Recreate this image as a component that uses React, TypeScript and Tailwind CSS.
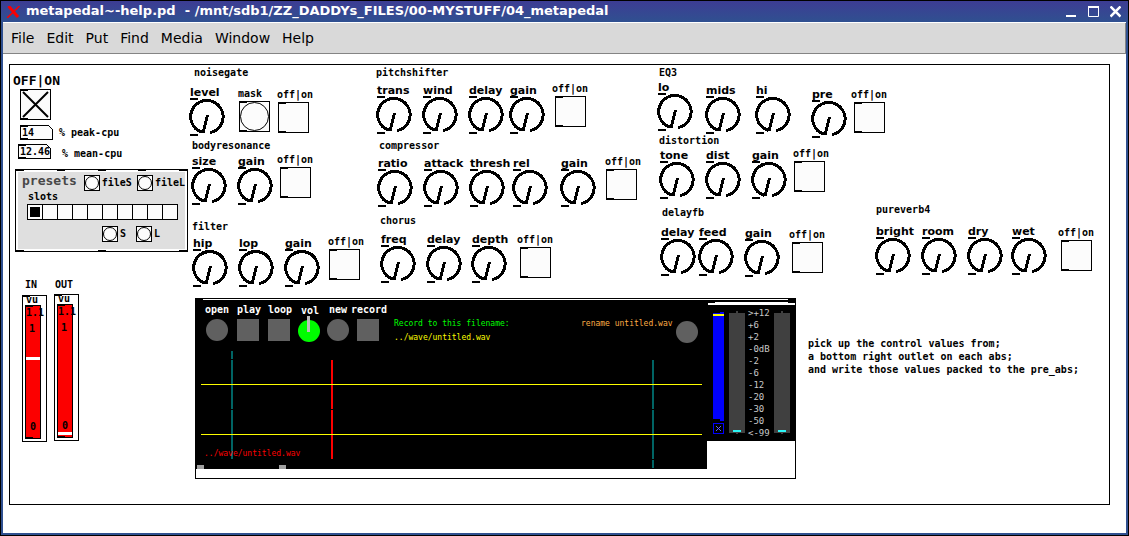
import { useState } from "react";
import type { ReactNode } from "react";
import clsx from "clsx";

type KnobNode = { label: string; at: string };

const menus = ["File", "Edit", "Put", "Find", "Media", "Window", "Help"];

const titles = [
  { text: "noisegate", at: "left-[184px] top-[2px]" },
  { text: "bodyresonance", at: "left-[182px] top-[75px]" },
  { text: "filter", at: "left-[182px] top-[156px]" },
  { text: "pitchshifter", at: "left-[366px] top-[2px]" },
  { text: "compressor", at: "left-[369px] top-[75px]" },
  { text: "chorus", at: "left-[370px] top-[150px]" },
  { text: "EQ3", at: "left-[649px] top-[2px]" },
  { text: "distortion", at: "left-[649px] top-[70px]" },
  { text: "delayfb", at: "left-[652px] top-[142px]" },
  { text: "pureverb4", at: "left-[866px] top-[139px]" },
  { text: "IN", at: "left-[15px] top-[214px]" },
  { text: "OUT", at: "left-[45px] top-[214px]" },
  { text: "% peak-cpu", at: "left-[49px] top-[62px]" },
  { text: "% mean-cpu", at: "left-[52px] top-[83px]" },
];

const knobs: KnobNode[] = [
  { label: "level", at: "left-[179px] top-[20px]" },
  { label: "size", at: "left-[181px] top-[89px]" },
  { label: "gain", at: "left-[227px] top-[89px]" },
  { label: "hip", at: "left-[182px] top-[171px]" },
  { label: "lop", at: "left-[228px] top-[171px]" },
  { label: "gain", at: "left-[274px] top-[171px]" },
  { label: "trans", at: "left-[366px] top-[18px]" },
  { label: "wind", at: "left-[412px] top-[18px]" },
  { label: "delay", at: "left-[458px] top-[18px]" },
  { label: "gain", at: "left-[499px] top-[18px]" },
  { label: "ratio", at: "left-[367px] top-[91px]" },
  { label: "attack", at: "left-[413px] top-[91px]" },
  { label: "thresh", at: "left-[459px] top-[91px]" },
  { label: "rel", at: "left-[502px] top-[91px]" },
  { label: "gain", at: "left-[550px] top-[91px]" },
  { label: "freq", at: "left-[370px] top-[167px]" },
  { label: "delay", at: "left-[416px] top-[167px]" },
  { label: "depth", at: "left-[461px] top-[167px]" },
  { label: "lo", at: "left-[647px] top-[15px]" },
  { label: "mids", at: "left-[695px] top-[18px]" },
  { label: "hi", at: "left-[745px] top-[18px]" },
  { label: "pre", at: "left-[801px] top-[22px]" },
  { label: "tone", at: "left-[649px] top-[83px]" },
  { label: "dist", at: "left-[695px] top-[83px]" },
  { label: "gain", at: "left-[741px] top-[83px]" },
  { label: "delay", at: "left-[650px] top-[160px]" },
  { label: "feed", at: "left-[688px] top-[160px]" },
  { label: "gain", at: "left-[734px] top-[161px]" },
  { label: "bright", at: "left-[865px] top-[159px]" },
  { label: "room", at: "left-[911px] top-[159px]" },
  { label: "dry", at: "left-[957px] top-[159px]" },
  { label: "wet", at: "left-[1001px] top-[159px]" },
];

const switches = [
  { at: "left-[267px] top-[24px]", inset: "ml-px" },
  { at: "left-[267px] top-[89px]", inset: "ml-[3px]" },
  { at: "left-[318px] top-[171px]", inset: "ml-px" },
  { at: "left-[542px] top-[18px]", inset: "ml-[3px]" },
  { at: "left-[595px] top-[91px]", inset: "ml-px" },
  { at: "left-[507px] top-[169px]", inset: "ml-[3px]" },
  { at: "left-[841px] top-[24px]", inset: "ml-[3px]" },
  { at: "left-[783px] top-[83px]", inset: "ml-px" },
  { at: "left-[779px] top-[164px]", inset: "ml-[3px]" },
  { at: "left-[1048px] top-[162px]", inset: "ml-[3px]" },
];

const dbScale = [">+12", "+6", "+2", "-0dB", "-2", "-6", "-12", "-20", "-30", "-50", "<-99"];

// inlet/outlet marks in the left corners of a box
const marks =
  "before:absolute before:left-0 before:top-0 before:h-px before:w-[7px] before:bg-black after:absolute after:bottom-0 after:left-0 after:h-px after:w-[7px] after:bg-black";

function Node({ at, children }: { at: string; children: ReactNode }) {
  return <div className={clsx("absolute", at)}>{children}</div>;
}

function Knob({ label, at }: KnobNode) {
  return (
    <Node at={at}>
      <label className="block w-[37px]">
        <span className="block h-[13px] whitespace-nowrap pl-px text-[11px] leading-[15px] font-['DejaVu_Sans'] font-bold">
          {label}
        </span>
        <span className="relative block h-[38px]">
          <svg width="37" height="38" viewBox="0 0 37 38" fill="none" stroke="#000" shapeRendering="crispEdges">
            <path d="M1 1h8M1 37h8" strokeWidth="2" />
            <path d="M13.500 34.3A16.2 16.2 0 1 1 21 34.6" strokeWidth="3" />
            <path d="M18.500 17l-4.500 18" strokeWidth="3" />
          </svg>
          <input type="range" defaultValue={0} className="absolute inset-0 h-full w-full cursor-pointer opacity-0" />
        </span>
      </label>
    </Node>
  );
}

function Toggle({ id, cross = false }: { id: string; cross?: boolean }) {
  const [on, setOn] = useState(cross);
  return (
    <span className="relative block h-[31px] w-[31px]">
      <input
        id={id}
        type="checkbox"
        checked={on}
        onChange={() => setOn(!on)}
        className={clsx("relative block h-[31px] w-[31px] appearance-none border border-black bg-[#fcfcfc]", marks)}
      />
      {on && (
        <svg className="pointer-events-none absolute inset-0" viewBox="0 0 31 31" stroke="#000" strokeWidth="2">
          <path d="M3 3L28 28M28 3L3 28" />
        </svg>
      )}
    </span>
  );
}

function Bang({ label, size }: { label: string; size: "small" | "large" }) {
  return (
    <button
      aria-label={label}
      className={clsx(
        "relative flex items-center justify-center border border-black bg-[#fcfcfc]",
        size === "large" ? "h-[31px] w-[31px]" : "h-4 w-4",
        size === "large" && marks
      )}
    >
      <span className="block h-full w-full rounded-full border border-black active:bg-black" />
    </button>
  );
}

function SmallBang({ label }: { label: string }) {
  return (
    <div className="flex items-center gap-[2px]">
      <Bang label={label} size="small" />
      <span>{label}</span>
    </div>
  );
}

function Presets() {
  const [slot, setSlot] = useState(0);
  return (
    <section className="relative w-[173px] border border-black p-[2px] leading-[12px]">
      <div className="absolute inset-x-0 top-0 flex justify-between">
        {[0, 1, 2, 3, 4].map((n) => (
          <span key={n} className="h-px w-2 bg-black" />
        ))}
      </div>
      <div className="absolute inset-x-0 bottom-0 flex justify-between">
        {[0, 1, 2].map((n) => (
          <span key={n} className="h-px w-2 bg-black" />
        ))}
      </div>
      <div className="h-[77px] bg-[#dfdfdf] pt-[3px]">
        <div className="flex h-4 items-center">
          <h2 className="w-[67px] self-start pl-1 text-[13px] leading-[12px] text-[#484848]">presets</h2>
          <div className="flex gap-[5px]">
            <SmallBang label="fileS" />
            <SmallBang label="fileL" />
          </div>
        </div>
        <p className="pl-[10px]">slots</p>
        <div className="ml-[9px] mt-px flex w-[151px] border-y border-l border-black bg-[#fcfcfc]">
          {Array.from({ length: 10 }, (_, n) => (
            <input
              key={n}
              type="radio"
              name="slot"
              aria-label={"slot " + (n + 1)}
              checked={slot === n}
              onChange={() => setSlot(n)}
              className="h-[14px] w-[15px] appearance-none border-r border-black bg-clip-content p-[2px] checked:bg-black"
            />
          ))}
        </div>
        <div className="ml-[84px] mt-[6px] flex gap-[10px]">
          <SmallBang label="S" />
          <SmallBang label="L" />
        </div>
      </div>
    </section>
  );
}

function Vu({ name, at, mark }: { name: string; at: string; mark: string }) {
  return (
    <Node at={at}>
      <div className="relative h-[147px] w-[25px] border border-black pl-[2px] leading-[10px]">
        <span className="absolute left-0 top-0 h-px w-[7px] bg-black" />
        <span className="block h-[9px] pl-px leading-[8px]">vu</span>
        <div className="relative h-[134px] w-4 border border-black bg-[#fc0000]">
          <span className="absolute left-0 top-0 h-px w-[7px] bg-black" />
          <span className="absolute bottom-0 left-0 h-px w-[7px] bg-black" />
          <span className={clsx("absolute inset-x-0 h-[3px] bg-white", mark)} />
          <span className="absolute left-0 top-[2px]">1.1</span>
          <span className="absolute left-[3px] top-[18px]">1</span>
          <span className="absolute left-1 bottom-[6px]">0</span>
          <input
            type="range"
            aria-label={name}
            className="absolute inset-0 h-full w-full opacity-0 [writing-mode:vertical-lr]"
          />
        </div>
      </div>
    </Node>
  );
}

function NumberBox({ value, label }: { value: string; label: string }) {
  return (
    <span className="relative block h-[15px] w-[33px]">
      <svg className="absolute inset-0" width="33" height="15" viewBox="0 0 33 15" fill="#fcfcfc" stroke="#000" shapeRendering="crispEdges">
        <path d="M.5 .5h28l4 4v10h-32z" />
        <path d="M0 1h8M0 14h8" strokeWidth="2" />
      </svg>
      <input
        aria-label={label}
        defaultValue={value}
        className="absolute inset-0 w-full bg-transparent pl-[2px] font-bold outline-none"
      />
    </span>
  );
}

function Player() {
  return (
    <section className="relative h-[181px] w-[601px] border border-black text-white">
      <div className="flex items-start">
        <div className="h-[170px] w-[511px] bg-black" />
        <div className="h-[142px] flex-1 bg-black" />
      </div>
      <svg className="absolute left-0 top-0" width="599" height="170" shapeRendering="crispEdges">
        <path d="M7 .5h585" stroke="#fff" />
        <path d="M512 4.500h87M519 3.500h73" stroke="#fff" strokeWidth="2" />
        <path d="M519 2.500h73" stroke="#000" />
        <path d="M36 52v8M36 61v49M36 111v49M457 61v49M457 111v49M457 161v8" stroke="#006464" strokeWidth="2" />
        <path d="M136 61v49M136 111v49" stroke="#fc0000" strokeWidth="2" />
        <path d="M5 85.500h501M5 135.500h501" stroke="#fcfc00" />
        <path d="M1 166h7v4h-7zM83 166h7v4h-7z" fill="#a0a0a0" />
      </svg>

      <Node at="left-[9px] top-[5px]">open</Node>
      <Node at="left-[41px] top-[5px]">play</Node>
      <Node at="left-[72px] top-[5px]">loop</Node>
      <Node at="left-[105px] top-[6px]">vol</Node>
      <Node at="left-[133px] top-[5px]">new</Node>
      <Node at="left-[155px] top-[5px]">record</Node>

      <Node at="left-[10px] top-[20px]">
        <button aria-label="open" className="block h-[22px] w-[22px] rounded-full bg-[#606060]" />
      </Node>
      <Node at="left-[41px] top-[20px]">
        <input type="checkbox" aria-label="play" className="block h-[22px] w-[22px] appearance-none bg-[#606060]" />
      </Node>
      <Node at="left-[72px] top-[20px]">
        <input type="checkbox" aria-label="loop" className="block h-[22px] w-[22px] appearance-none bg-[#606060]" />
      </Node>
      <Node at="left-[102px] top-[17px]">
        <svg width="22" height="26" viewBox="0 0 22 26">
          <circle cx="11" cy="15" r="11" fill="#00fc00" />
          <path d="M9 0h3v16h-3z" fill="#bcbcbc" />
        </svg>
        <input type="range" aria-label="vol" className="absolute inset-0 h-full w-full opacity-0" />
      </Node>
      <Node at="left-[131px] top-[20px]">
        <button aria-label="new" className="block h-[22px] w-[22px] rounded-full bg-[#606060]" />
      </Node>
      <Node at="left-[161px] top-[20px]">
        <input type="checkbox" aria-label="record" className="block h-[22px] w-[22px] appearance-none bg-[#606060]" />
      </Node>
      <Node at="left-[480px] top-[22px]">
        <button aria-label="rename" className="block h-[22px] w-[22px] rounded-full bg-[#606060]" />
      </Node>

      <div className="whitespace-nowrap text-[8px] font-normal">
        <Node at="left-[198px] top-[19px]">
          <span className="text-[#00fc00]">Record to this filename:</span>
        </Node>
        <Node at="left-[198px] top-[33px]">
          <span className="text-[#fcfc00]">../wave/untitled.wav</span>
        </Node>
        <Node at="left-[385px] top-[19px]">
          <span className="text-[#fcac44]">rename untitled.wav</span>
        </Node>
        <Node at="left-[8px] top-[149px]">
          <span className="text-[#fc0000]">../wave/untitled.wav</span>
        </Node>
      </div>

      <Node at="left-[517px] top-[13px]">
        <div className="relative h-[109px] w-[11px] bg-[#0000fc]">
          <span className="absolute left-0 top-0 h-px w-[7px] bg-black" />
          <span className="absolute inset-x-0 top-[2px] h-[2px] bg-[#fcfc00]" />
          <span className="absolute bottom-0 left-0 h-[2px] w-[7px] bg-black" />
          <input
            type="range"
            aria-label="output level"
            className="absolute inset-0 h-full w-full opacity-0 [writing-mode:vertical-lr]"
          />
        </div>
        <button aria-label="mute" className="mt-[2px] flex h-[11px] w-[11px] items-center justify-center border border-[#0000fc]">
          <svg width="5" height="5" viewBox="0 0 5 5" stroke="#6060fc">
            <path d="M0 0L5 5M5 0L0 5" />
          </svg>
        </button>
      </Node>

      <Node at="left-[533px] top-[8px]">
        <div className="flex gap-[3px]">
          <Meter />
          <ul className="w-[23px] whitespace-nowrap font-normal text-[9px] leading-[12px] text-[#c8c8c8]">
            {dbScale.map((db) => (
              <li key={db}>{db}</li>
            ))}
          </ul>
          <Meter />
        </div>
      </Node>
    </section>
  );
}

function Meter() {
  return (
    <div className="flex flex-col items-center pt-1">
      <span className="h-[2px] w-[2px] bg-[#404040]" />
      <div className="flex h-[120px] w-4 items-end justify-center bg-[#404040] pb-px">
        <span className="h-[2px] w-2 bg-[#2cf4f4]" />
      </div>
      <span className="h-px w-[2px] bg-[#404040]" />
    </div>
  );
}

function TitleBar() {
  return (
    <header className="flex h-[21px] items-center justify-between bg-linear-to-b from-[#3c3c94] to-[#2f5090] pl-[6px] pr-[7px]">
      <div className="flex items-center gap-[6px]">
        <svg width="13" height="12" viewBox="0 0 13 12" stroke="#fc0000">
          <path d="M1.500 0L11 11" strokeWidth="3" />
          <path d="M12.500 0L0 12" strokeWidth="1.500" />
        </svg>
        <h1 className="h-5 whitespace-pre text-[13px] leading-[18px] font-bold text-white font-['DejaVu_Sans']">
          metapedal~-help.pd  - /mnt/sdb1/ZZ_DADDYs_FILES/00-MYSTUFF/04_metapedal
        </h1>
      </div>
      <div className="flex gap-[11px]">
        <button aria-label="Minimize">
          <svg width="11" height="12" viewBox="0 0 11 12">
            <path d="M0 9h10v2h-10z" fill="#fff" />
          </svg>
        </button>
        <button aria-label="Maximize">
          <svg width="11" height="12" viewBox="0 0 11 12" fill="none" stroke="#fff">
            <path d="M.5 1v9.500h10v-9.500M0 1h11" />
            <path d="M0 1h11" strokeWidth="2" />
          </svg>
        </button>
        <button aria-label="Close">
          <svg width="11" height="12" viewBox="0 0 11 12" stroke="#fff" strokeWidth="2.500">
            <path d="M.5 .5L10.500 10.500M10.500 .5L.5 10.500" />
          </svg>
        </button>
      </div>
    </header>
  );
}

export default function App() {
  return (
    <div className="flex min-h-screen flex-col border border-black bg-[#2f5090]">
      <TitleBar />
      <div className="mx-[2px] mb-[2px] flex flex-1 flex-col bg-white pt-px">
        <nav className="flex h-[31px] items-center gap-3 border-b border-r border-[#848484] bg-[#d9d9d9] pl-2 text-[14px] text-black font-['DejaVu_Sans']">
          {menus.map((menu) => (
            <button key={menu}>{menu}</button>
          ))}
        </nav>
        <main className="relative mb-7 ml-[6px] mr-4 mt-[10px] h-[441px] border border-black font-['DejaVu_Sans_Mono'] text-[10px] leading-[12px] font-bold text-black">
          {titles.map((title) => (
            <Node key={title.text} at={title.at}>
              <span className="whitespace-nowrap">{title.text}</span>
            </Node>
          ))}

          {knobs.map((knob) => (
            <Knob key={knob.at} {...knob} />
          ))}

          {switches.map((item, n) => (
            <Node key={item.at} at={item.at}>
              <label htmlFor={"switch-" + n} className="mb-px block">
                off|on
              </label>
              <div className={item.inset}>
                <Toggle id={"switch-" + n} />
              </div>
            </Node>
          ))}

          <Node at="left-[228px] top-[23px]">
            <span className="mb-px block">mask</span>
            <div className="ml-px">
              <Bang label="mask" size="large" />
            </div>
          </Node>

          <Node at="left-[3px] top-[10px]">
            <label htmlFor="power" className="mb-[2px] block text-[13px] leading-[12px]">
              OFF|ON
            </label>
            <div className="ml-[7px]">
              <Toggle id="power" cross />
            </div>
          </Node>
          <Node at="left-[10px] top-[60px]">
            <NumberBox value="14" label="peak-cpu" />
          </Node>
          <Node at="left-[8px] top-[79px]">
            <NumberBox value="12.46" label="mean-cpu" />
          </Node>

          <Node at="left-[5px] top-[104px]">
            <Presets />
          </Node>

          <Vu name="IN" at="left-[12px] top-[230px]" mark="top-[51px]" />
          <Vu name="OUT" at="left-[44px] top-[229px]" mark="bottom-[2px]" />

          <Node at="left-[185px] top-[233px]">
            <Player />
          </Node>

          <Node at="left-[798px] top-[272px]">
            <p className="whitespace-pre leading-[13px]">
              {"pick up the control values from;\na bottom right outlet on each abs;\nand write those values packed to the pre_abs;"}
            </p>
          </Node>
        </main>
      </div>
    </div>
  );
}
